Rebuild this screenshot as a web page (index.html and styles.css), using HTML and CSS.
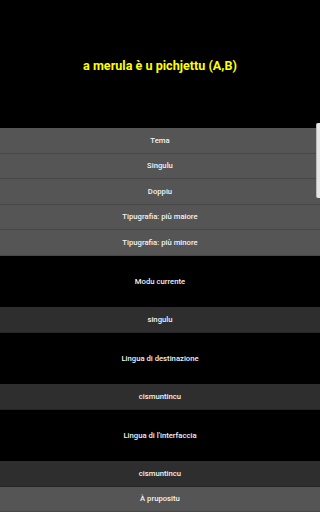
FILE: index.html
```html
<!DOCTYPE html>
<html lang="co">
<head>
    <meta charset="UTF-8">
    <meta name="viewport" content="width=device-width, initial-scale=1.0">
    <title>a merula è u pichjettu</title>
    <link rel="stylesheet" href="styles.css">
</head>
<body>
    <!-- Titulu -->
    <div class="header">
        <h1 class="title">a merula è u pichjettu (A,B)</h1>
    </div>

    <!-- Menu -->
    <div class="menu">
        <div class="item">Tema</div>
        <div class="item">Singulu</div>
        <div class="item">Doppiu</div>
        <div class="item">Tipugrafia: più maiore</div>
        <div class="item">Tipugrafia: più minore</div>

        <div class="label">Modu currente</div>
        <div class="item dark">singulu</div>

        <div class="label">Lingua di destinazione</div>
        <div class="item dark">cismuntincu</div>

        <div class="label">Lingua di l'interfaccia</div>
        <div class="item dark">cismuntincu</div>

        <div class="item">À prupositu</div>
    </div>

    <div class="scrollbar"></div>
</body>
</html>
```

FILE: styles.css
```css
body {
    margin: 0;
    background: #000;
    color: #fff;
    font-family: Roboto, "Liberation Sans", sans-serif;
    text-align: center;
    overflow: hidden;
}
.header {
    height: 128px;
    display: flex;
    align-items: center;
    justify-content: center;
}
.title {
    margin: 0;
    font-size: 12.6px;
    font-weight: bold;
    color: #ffff00;
    margin-top: 2px;
}
.menu {
    display: flex;
    flex-direction: column;
}
.item {
    height: 25.5px;
    box-sizing: border-box;
    display: flex;
    align-items: center;
    justify-content: center;
    font-size: 7.7px;
    font-weight: 500;
    background: #555;
    border-bottom: 1px solid #474747;
    color: #f2f2f2;
}
.item.dark {
    background: #2e2e2e;
    border-bottom: 1px solid #262626;
}
.label {
    height: 51.5px;
    display: flex;
    align-items: center;
    justify-content: center;
    font-size: 7.7px;
    font-weight: 500;
    color: #f2f2f2;
}
.scrollbar {
    position: absolute;
    top: 123px;
    right: 0;
    width: 3px;
    height: 75px;
    background: #e6e6e6;
    border-left: 1px solid #bbb;
    border-radius: 2px 0 0 2px;
}
```
